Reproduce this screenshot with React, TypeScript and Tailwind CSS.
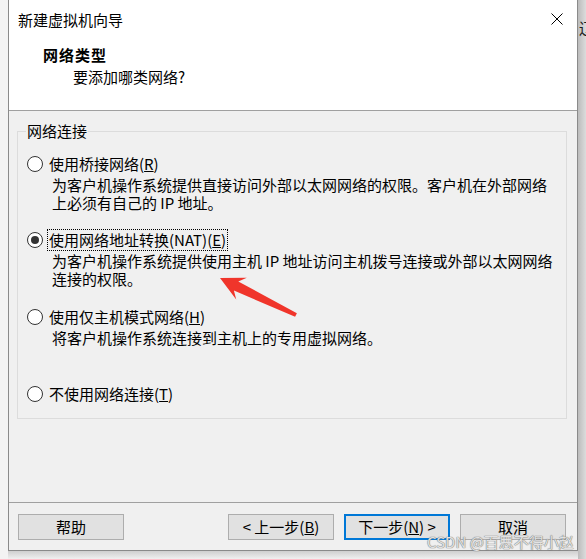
import React from 'react'

const Radio = ({ checked = false }: { checked?: boolean }) => (
  <span className="flex h-[16px] w-[16px] shrink-0 items-center justify-center rounded-full border border-[#333333] bg-white">
    {checked && <span className="h-[8px] w-[8px] rounded-full bg-[#333333]" />}
  </span>
)

interface OptionProps {
  label: React.ReactNode
  lines?: string[]
  checked?: boolean
  focused?: boolean
  className?: string
}

const Option = ({ label, lines = [], checked, focused, className = '' }: OptionProps) => (
  <div className={className}>
    <div className="flex h-[22px] items-center">
      <Radio checked={checked} />
      <span
        className={`ml-[4px] border px-[1px] py-[1px] leading-[18px] ${
          focused ? 'border-dotted border-black' : 'border-transparent'
        }`}
      >
        {label}
      </span>
    </div>
    {lines.length > 0 && (
      <div className="ml-[25px] mt-[1px] whitespace-nowrap leading-[18px]">
        {lines.map((line) => (
          <div key={line}>{line}</div>
        ))}
      </div>
    )}
  </div>
)

const Button = ({ children, primary = false }: { children: React.ReactNode; primary?: boolean }) => (
  <div
    className={`flex h-[26px] w-[106px] items-center justify-center bg-[#e1e1e1] leading-[18px] ${
      primary ? 'border-2 border-[#0078d7]' : 'border border-[#adadad]'
    }`}
  >
    {children}
  </div>
)

export default function App() {
  return (
    <div className="relative flex h-[559px] w-[586px] overflow-hidden bg-[#f0f0f0] font-['Noto_Sans_CJK_SC',sans-serif] text-[15px] text-black">
      <div className="w-[8px] shrink-0 bg-[#f3f3f3]" />

      <div className="flex w-[570px] shrink-0 flex-col">
        <div className="flex h-[551px] flex-col border-x border-b border-[#8a8a8a] bg-[#f0f0f0]">
          {/* header */}
          <div className="h-[111px] shrink-0 border-b border-[#a0a0a0] bg-white pl-[9px] pr-[14px] pt-[11px]">
            <div className="flex items-center justify-between leading-[18px]">
              <span>新建虚拟机向导</span>
              <svg width="12" height="12" viewBox="0 0 12 12" className="-mt-[2px]">
                <path d="M0.5 0.5 L11.5 11.5 M11.5 0.5 L0.5 11.5" stroke="#000" strokeWidth="1" fill="none" />
              </svg>
            </div>
            <div className="mt-[17px] pl-[25px] font-bold leading-[18px] tracking-[1px]">网络类型</div>
            <div className="mt-[4px] pl-[55px] leading-[18px]">要添加哪类网络?</div>
          </div>

          {/* body */}
          <div className="flex-1 pl-[8px] pr-[10px] pt-[20px]">
            <div className="relative h-[288px] border border-[#dcdcdc] pl-[9px] pt-[21px]">
              <span className="absolute -top-[10px] left-[8px] bg-[#f0f0f0] px-[1px] leading-[18px]">网络连接</span>

              <Option
                label={
                  <>
                    使用桥接网络(<u>R</u>)
                  </>
                }
                lines={[
                  '为客户机操作系统提供直接访问外部以太网网络的权限。客户机在外部网络',
                  '上必须有自己的 IP 地址。',
                ]}
              />
              <Option
                className="mt-[17px]"
                checked
                focused
                label={
                  <>
                    使用网络地址转换(NAT)(<u>E</u>)
                  </>
                }
                lines={[
                  '为客户机操作系统提供使用主机 IP 地址访问主机拨号连接或外部以太网网络',
                  '连接的权限。',
                ]}
              />
              <Option
                className="mt-[18px]"
                label={
                  <>
                    使用仅主机模式网络(<u>H</u>)
                  </>
                }
                lines={['将客户机操作系统连接到主机上的专用虚拟网络。']}
              />
              <Option
                className="mt-[36px]"
                label={
                  <>
                    不使用网络连接(<u>T</u>)
                  </>
                }
              />
            </div>
          </div>

          {/* footer */}
          <div className="flex h-[48px] shrink-0 border-t border-[#a0a0a0] pl-[9px] pr-[11px] pt-[11px]">
            <Button>帮助</Button>
            <div className="ml-auto flex gap-[10px]">
              <Button>
                &lt; 上一步(<u>B</u>)
              </Button>
              <Button primary>
                下一步(<u>N</u>) &gt;
              </Button>
              <Button>取消</Button>
            </div>
          </div>
        </div>
        <div className="h-[8px] bg-gradient-to-b from-[#cfcfcf] to-[#f0f0f0]" />
      </div>

      <div className="relative w-[8px] shrink-0 overflow-hidden bg-gradient-to-r from-[#bcbcbc] to-[#dcdcdc]">
        <span className="absolute left-[1px] top-[19px] leading-[18px] text-[#1a1a1a]">辽</span>
      </div>

      {/* red annotation arrow */}
      <svg className="pointer-events-none absolute left-0 top-0" width="586" height="559" viewBox="0 0 586 559">
        <polygon
          points="220,278 246.8,277.8 238.3,281.5 296.9,313.2 295.1,316.8 233.9,290.5 236.2,299.4"
          fill="#f0352b"
        />
      </svg>

      {/* watermark */}
      <span className="pointer-events-none absolute left-[427px] top-[533px] leading-[18px] text-[#e2e2e2] [text-shadow:0_0_1px_#6f6f6f,0_0_1px_#6f6f6f]">
        CSDN @百思不得小赵
      </span>
    </div>
  )
}
